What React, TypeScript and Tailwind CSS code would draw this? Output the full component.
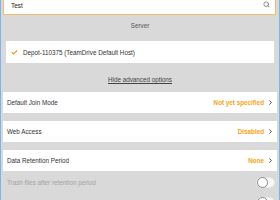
import { ChevronRight, Search, Check } from 'lucide-react';

type SettingRow = { label: string; value: string };

const ROWS: SettingRow[] = [
  { label: 'Default Join Mode', value: 'Not yet specified' },
  { label: 'Web Access', value: 'Disabled' },
  { label: 'Data Retention Period', value: 'None' },
];

function Toggle() {
  return (
    <div className="flex h-[11px] w-[19px] shrink-0 items-center rounded-full border border-[#e6e6e6] bg-[#f7f7f7]">
      <div className="h-[11px] w-[11px] rounded-full border border-[#8a8a8a] bg-white" />
    </div>
  );
}

export default function App() {
  return (
    <div
      className="flex h-[200px] w-[280px] flex-col overflow-hidden border-x border-[#7fb2e5] bg-[#d9d9d9] text-[6.3px] leading-[9px] text-[#333333] *:shrink-0"
      style={{ fontFamily: '"Liberation Sans", Arial, sans-serif' }}
    >
      {/* search field, scrolled partly out of view */}
      <div className="ml-[2px] mt-[-7px] flex h-[22px] w-[273px] items-center justify-between border border-[#f2bd6c] bg-white pl-[7px] pr-[5px]">
        <span className="pt-[2px] text-[6.5px] text-[#222222]">Test</span>
        <Search className="size-[7px] text-[#666666]" strokeWidth={2.5} />
      </div>

      <div className="mt-[6px] text-center text-[#555555]">Server</div>

      <div className="ml-[5px] mt-[11px] flex h-[22px] w-[268px] items-center gap-[5px] bg-white pl-[5px]">
        <Check className="size-[7px] text-[#f29a12]" strokeWidth={4} />
        <span>Depot-110375 (TeamDrive Default Host)</span>
      </div>

      <div className="mt-[12px] text-center text-[#444444] underline">Hide advanced options</div>

      <div className="mt-[8px] flex flex-col gap-[8px]">
        {ROWS.map((row) => (
          <div
            key={row.label}
            className="ml-[2px] flex h-[21px] w-[274px] items-center justify-between bg-white pl-[4px] pr-[3px]"
          >
            <span>{row.label}</span>
            <div className="flex items-center gap-[3px]">
              <span className="font-bold text-[#f5a312]">{row.value}</span>
              <ChevronRight className="size-[7px] text-[#333333]" strokeWidth={3} />
            </div>
          </div>
        ))}
      </div>

      <div className="ml-[2px] mt-[6px] flex h-[11px] w-[272px] items-center justify-between pl-[4px]">
        <span className="text-[#a3a3a3]">Trash files after retention period</span>
        <Toggle />
      </div>

      <div className="ml-[2px] mt-[9px] flex w-[272px] justify-end">
        <Toggle />
      </div>
    </div>
  );
}
